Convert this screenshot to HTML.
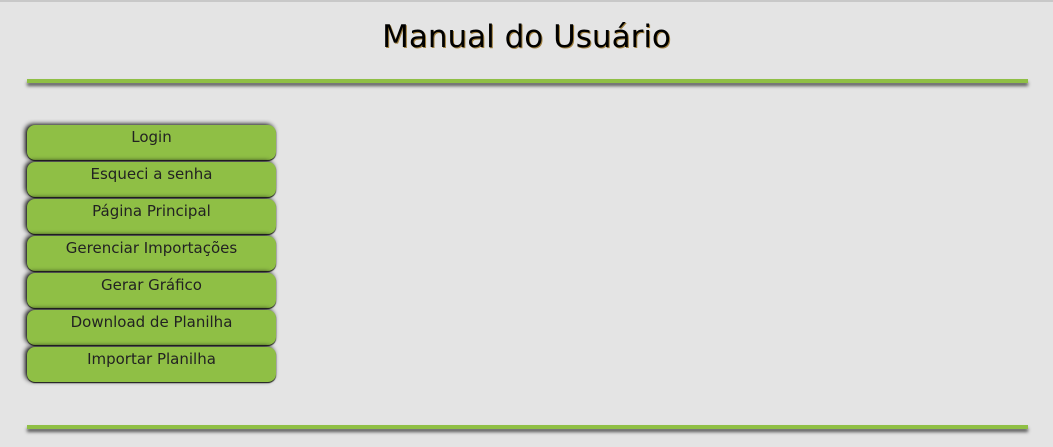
<!DOCTYPE html>
<html><head><style>
html,body{margin:0;padding:0}
body{width:1053px;height:447px;background:#e4e4e4;position:relative;overflow:hidden;font-family:"DejaVu Sans","Liberation Sans",sans-serif}
.top{position:absolute;top:0;left:0;width:1053px;height:2px;background:#c8c8c8}
h1{position:absolute;top:19px;left:0;width:1053px;text-align:center;margin:0;font-weight:normal;font-size:31px;color:#000;text-shadow:1px 1px 0 #a08040}
.line{position:absolute;left:27px;width:1001px;height:4px;background:#8fbf45;box-shadow:0 3px 3px #555}
.btn{position:absolute;left:27px;width:249px;height:35px;background:#8fbf45;border-radius:8px;box-shadow:-2px -1px 5px #111,0 1px 1px #111;text-align:center;font-size:15px;line-height:24px;color:#222}
</style></head><body>
<div class="top"></div>
<h1>Manual do Usuário</h1>
<div class="line" style="top:79px"></div>
<div class="btn" style="top:125px">Login</div>
<div class="btn" style="top:162px">Esqueci a senha</div>
<div class="btn" style="top:199px">Página Principal</div>
<div class="btn" style="top:236px">Gerenciar Importações</div>
<div class="btn" style="top:273px">Gerar Gráfico</div>
<div class="btn" style="top:310px">Download de Planilha</div>
<div class="btn" style="top:347px">Importar Planilha</div>
<div class="line" style="top:425px"></div>
</body></html>
